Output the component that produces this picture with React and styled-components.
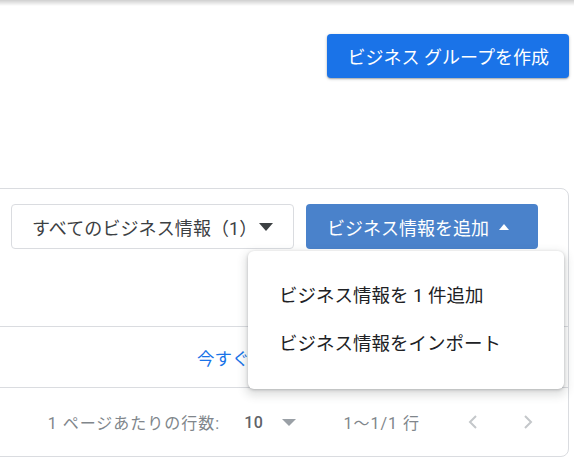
import React from 'react'
import styled, { createGlobalStyle } from 'styled-components'

const GlobalStyle = createGlobalStyle`
    html, body {
        margin: 0;
        padding: 0;
        background: #fff;
        overflow: hidden;
    }
    body {
        font-family: Roboto, "Noto Sans CJK JP", sans-serif;
        color: #3c4043;
    }
`

const Page = styled.div`
    width: 574px;
    height: 458px;
    overflow: hidden;
`
const TopShadow = styled.div`
    height: 6px;
    background: linear-gradient(#cfcfcf, rgba(255,255,255,0));
`
const Header = styled.div`
    display: flex;
    justify-content: flex-end;
    padding: 28px 5px 0 0;
    margin-bottom: 110px;
`
const PrimaryButton = styled.button`
    height: 44px;
    padding: 0 20px 0 21px;
    border: none;
    border-radius: 4px;
    background: #1a73e8;
    color: #fff;
    font-family: inherit;
    font-size: 18px;
    box-shadow: 0 1px 3px rgba(60,64,67,0.35), 0 1px 1px rgba(60,64,67,0.2);
    cursor: pointer;
`
const Card = styled.div`
    margin: 0 5px 0 -20px;
    height: 267px;
    border: 1px solid #dadce0;
    border-radius: 8px;
`
const ToolbarSection = styled.div`
    height: 138px;
    box-sizing: border-box;
    padding: 15px 0 0 30px;
    border-bottom: 1px solid #dadce0;
`
const Toolbar = styled.div`
    display: flex;
    gap: 12px;
`
const FilterButton = styled.button`
    width: 283px;
    height: 45px;
    box-sizing: border-box;
    display: flex;
    align-items: center;
    justify-content: space-between;
    padding: 0 20px 0 20px;
    border: 1px solid #dadce0;
    border-radius: 4px;
    background: #fff;
    color: #3c4043;
    font-family: inherit;
    font-size: 18px;
    letter-spacing: 0.1px;
`
const AddWrap = styled.div`
    position: relative;
`
const AddButton = styled.button`
    width: 232px;
    height: 45px;
    display: flex;
    align-items: center;
    gap: 10px;
    padding: 0 0 0 21px;
    border: none;
    border-radius: 4px;
    background: #4a82cb;
    color: #fff;
    font-family: inherit;
    font-size: 18px;
`
const Caret = styled.span`
    width: 0;
    height: 0;
    border-left: ${p => p.size}px solid transparent;
    border-right: ${p => p.size}px solid transparent;
    ${p => p.up
        ? `border-bottom: ${p.h}px solid ${p.color};`
        : `border-top: ${p.h}px solid ${p.color};`}
`
const Menu = styled.div`
    position: absolute;
    left: -58px;
    top: 47px;
    width: 316px;
    padding: 19px 0 23px;
    background: #fff;
    border-radius: 6px;
    box-shadow: 0 1px 3px rgba(60,64,67,0.3), 0 4px 8px 3px rgba(60,64,67,0.15);
    z-index: 2;
`
const MenuItem = styled.div`
    height: 48px;
    display: flex;
    align-items: center;
    padding-left: 31px;
    font-size: 18.5px;
    color: #202124;
`
const LinkRow = styled.div`
    height: 60px;
    display: flex;
    align-items: center;
    padding-left: 216px;
    border-bottom: 1px solid #dadce0;
    color: #1a73e8;
    font-size: 17.5px;
    white-space: nowrap;
    overflow: hidden;
`
const Pagination = styled.div`
    height: 68px;
    display: flex;
    align-items: center;
    justify-content: flex-end;
    padding-right: 35px;
    color: #80868b;
    font-size: 16px;
    letter-spacing: 1px;
`
const PageLabel = styled.span`
    margin-right: 24px;
`
const RowsValue = styled.span`
    margin-right: 19px;
    color: #5f6368;
    font-weight: 500;
    letter-spacing: 0.5px;
`
const RowsCaret = styled.span`
    margin-right: 47px;
    display: flex;
`
const RangeText = styled.span`
    margin-right: 48px;
`
const Chevron = styled.svg`
    width: 10px;
    height: 16px;
    margin-right: ${p => p.gap || 0}px;
`

function App() {
    return (
        <Page>
            <GlobalStyle />
            <TopShadow />
            <Header>
                <PrimaryButton>ビジネス グループを作成</PrimaryButton>
            </Header>
            <Card>
                <ToolbarSection>
                    <Toolbar>
                        <FilterButton>
                            <span>すべてのビジネス情報（1）</span>
                            <Caret size={7.5} h={8} color="#3c4043" />
                        </FilterButton>
                        <AddWrap>
                            <AddButton>
                                <span>ビジネス情報を追加</span>
                                <Caret up size={5.5} h={6} color="#fff" />
                            </AddButton>
                            <Menu>
                                <MenuItem>ビジネス情報を 1 件追加</MenuItem>
                                <MenuItem>ビジネス情報をインポート</MenuItem>
                            </Menu>
                        </AddWrap>
                    </Toolbar>
                </ToolbarSection>
                <LinkRow>今すぐビジネス情報を追加</LinkRow>
                <Pagination>
                    <PageLabel>1 ページあたりの行数:</PageLabel>
                    <RowsValue>10</RowsValue>
                    <RowsCaret>
                        <Caret size={7} h={7} color="#9aa0a6" />
                    </RowsCaret>
                    <RangeText>1〜1/1 行</RangeText>
                    <Chevron viewBox="0 0 10 16" gap={45}>
                        <polyline points="8,2 2,8 8,14" fill="none" stroke="#c4c7ca" strokeWidth="2" />
                    </Chevron>
                    <Chevron viewBox="0 0 10 16">
                        <polyline points="2,2 8,8 2,14" fill="none" stroke="#c4c7ca" strokeWidth="2" />
                    </Chevron>
                </Pagination>
            </Card>
        </Page>
    )
}

export default App
